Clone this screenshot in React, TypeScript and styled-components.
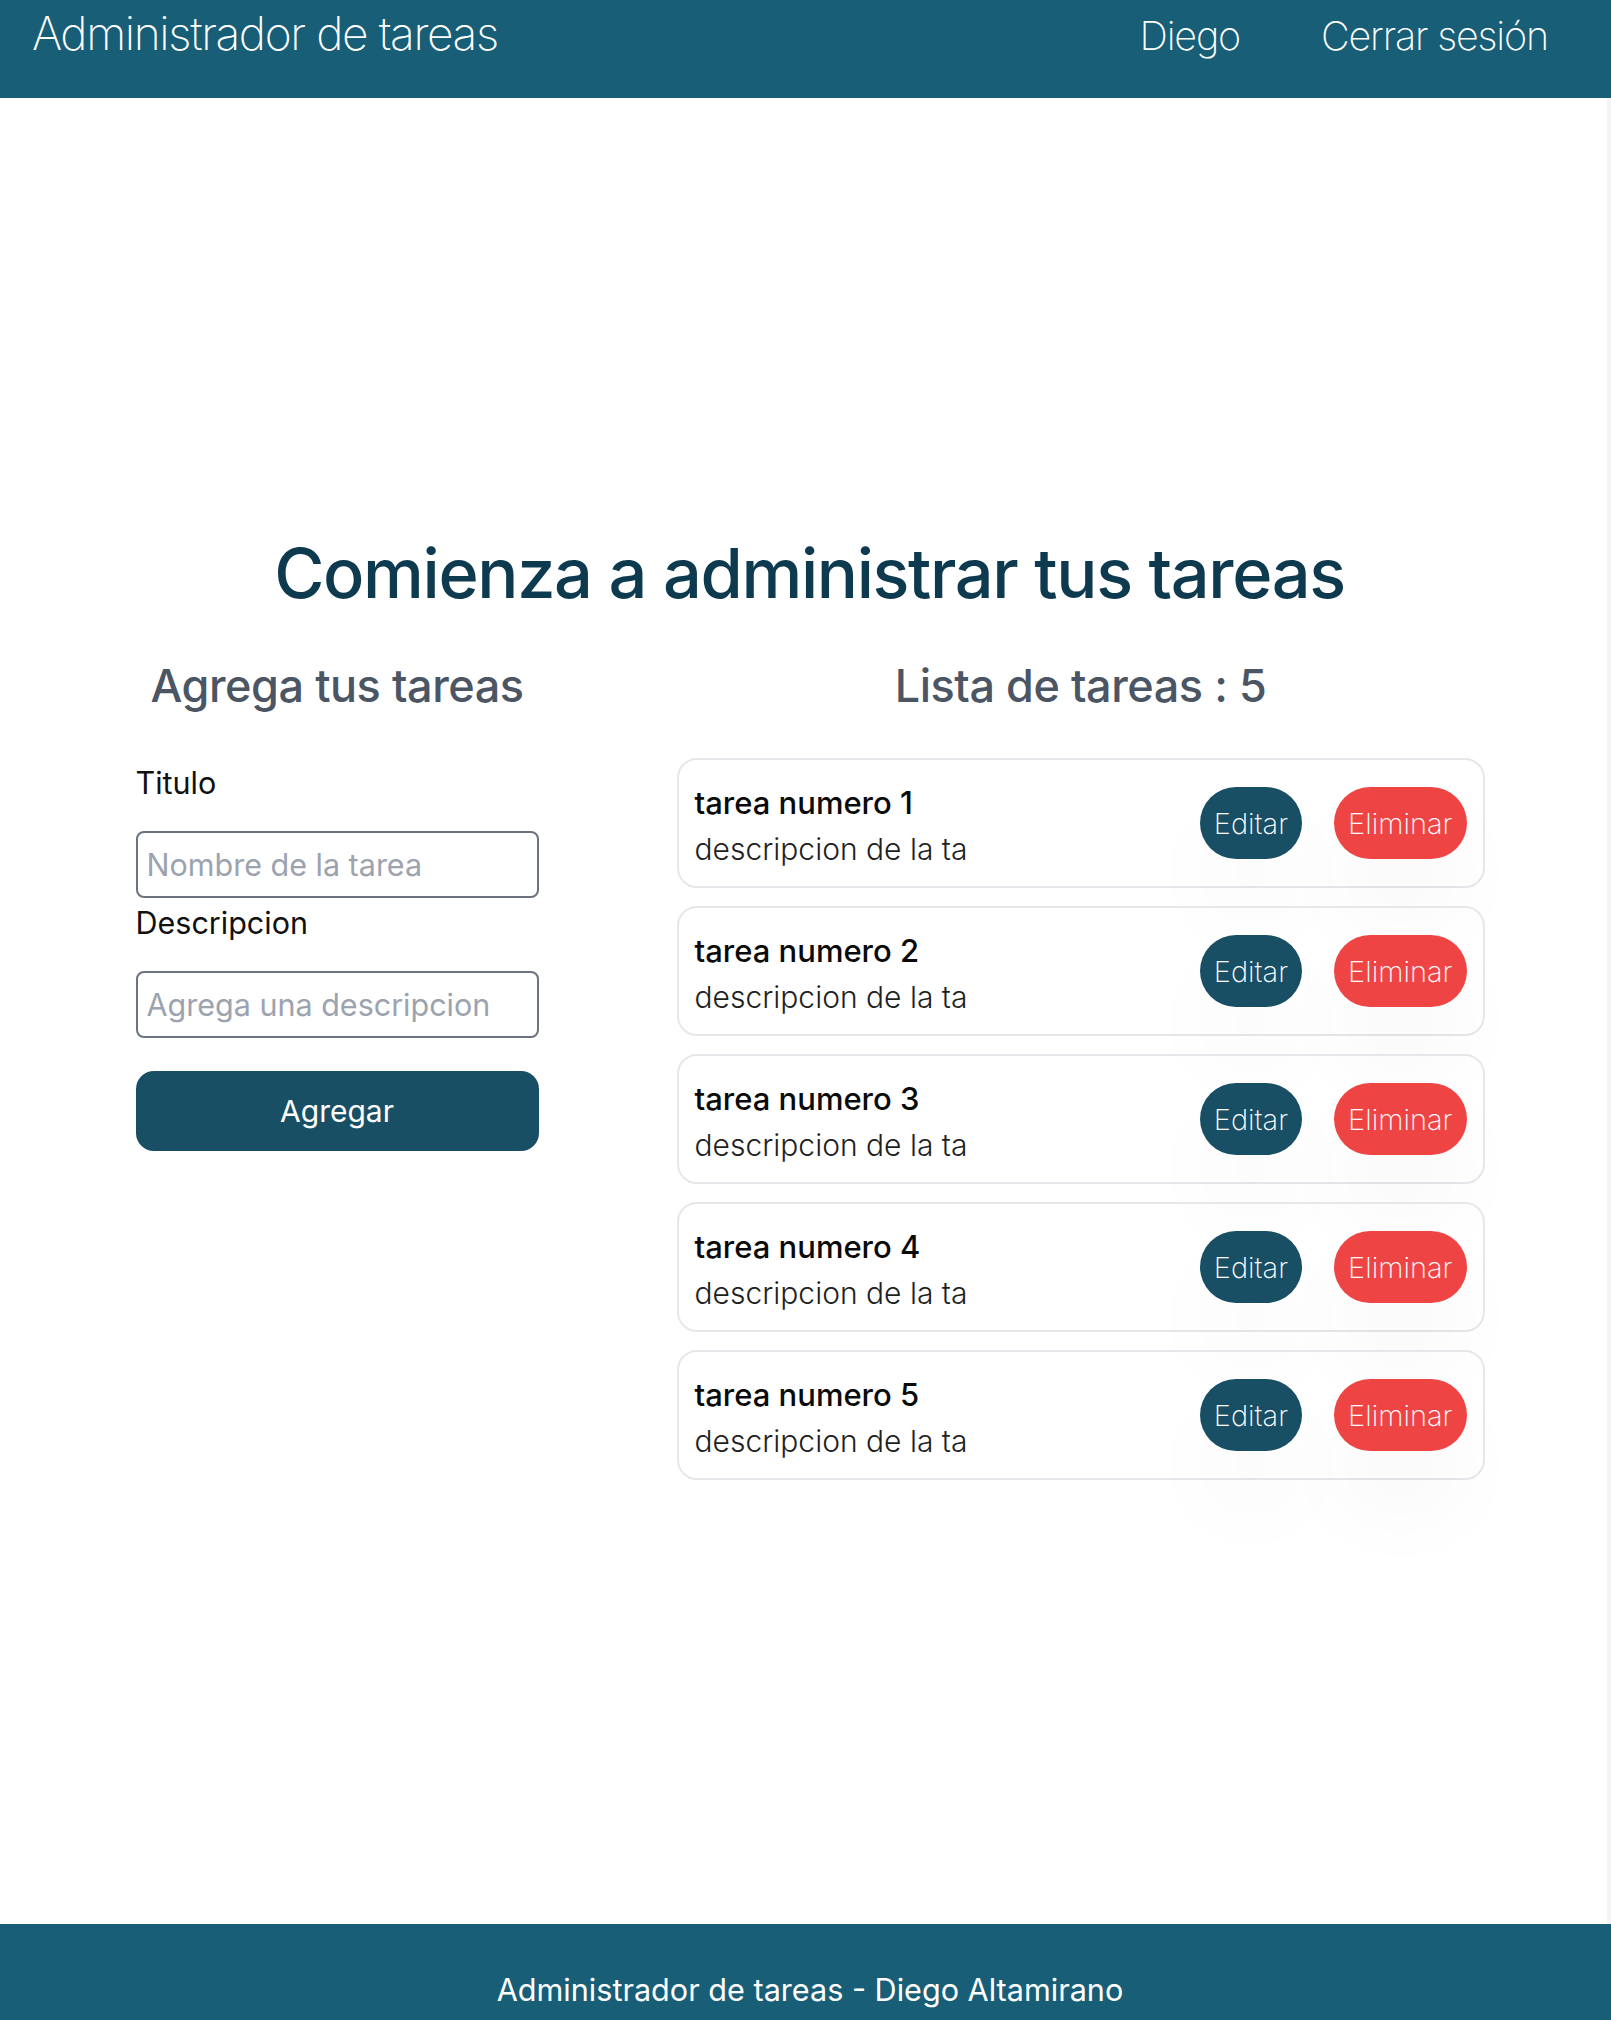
import React from "react";
import styled, { createGlobalStyle } from "styled-components";

const Global = createGlobalStyle`
  * { box-sizing: border-box; }
  html, body { margin: 0; padding: 0; background: #ffffff; }
  body { font-family: Inter, "Noto Sans", "Liberation Sans", sans-serif; }
`;

const Page = styled.div`
  min-height: 100vh;
  display: flex;
  flex-direction: column;
`;

const Header = styled.header`
  height: 98px;
  background: #175e76;
  color: #ffffff;
  display: flex;
  align-items: baseline;
  justify-content: space-between;
  padding: 6px 63px 0 32px;
`;

const Brand = styled.div`
  font-size: 46px;
  font-weight: 200;
  letter-spacing: -0.03em;
  line-height: 54px;
`;

const Nav = styled.nav`
  display: flex;
  align-items: baseline;
  gap: 81px;
`;

const NavItem = styled.span`
  font-size: 39.5px;
  font-weight: 200;
  letter-spacing: -0.03em;
  line-height: 54px;
`;

const Main = styled.main`
  flex: 1;
  display: flex;
  flex-direction: column;
  align-items: center;
  padding: 435px 0 0 12px;
  border-right: 4px solid #f4f4f4;
`;

const Title = styled.h1`
  margin: 0;
  font-size: 68.5px;
  font-weight: 500;
  line-height: 82px;
  letter-spacing: -0.02em;
  color: #0d3a4e;
`;

const Columns = styled.div`
  display: flex;
  gap: 138px;
  margin-top: 43px;
  margin-left: 1px;
`;

const LeftCol = styled.section`
  width: 403px;
  display: flex;
  flex-direction: column;
`;

const RightCol = styled.section`
  width: 808px;
  display: flex;
  flex-direction: column;
`;

const ColTitle = styled.h2`
  margin: 0 0 44px;
  text-align: center;
  font-size: 45px;
  font-weight: 500;
  line-height: 56px;
  letter-spacing: -0.01em;
  color: #4b5563;
`;

const Field = styled.div`
  display: flex;
  flex-direction: column;
  margin-top: 5px;
`;

const Label = styled.label`
  display: block;
  font-size: 30.5px;
  line-height: 40px;
  color: #111111;
  margin-bottom: 28px;
`;

const Input = styled.input`
  width: 100%;
  height: 67px;
  border: 2px solid #6b7280;
  border-radius: 8px;
  padding: 0 9px;
  font-family: inherit;
  font-size: 30.5px;
  color: #111;
  &::placeholder { color: #9ca3af; }
`;

const AddButton = styled.button`
  margin-top: 33px;
  height: 80px;
  width: 100%;
  border: none;
  border-radius: 18px;
  background: #184f65;
  color: #ffffff;
  font-family: inherit;
  font-size: 30px;
  font-weight: 400;
`;

const List = styled.div`
  display: flex;
  flex-direction: column;
  gap: 18px;
`;

const Card = styled.div`
  height: 130px;
  border: 2px solid #e5e7eb;
  border-radius: 20px;
  background: transparent;
  display: flex;
  align-items: center;
  justify-content: space-between;
  padding: 8px 16px 0 16px;
`;

const CardText = styled.div`
  display: flex;
  flex-direction: column;
`;

const CardTitle = styled.div`
  font-size: 31px;
  font-weight: 500;
  line-height: 44px;
  color: #0a0a0a;
`;

const CardDesc = styled.div`
  font-size: 30px;
  font-weight: 300;
  line-height: 48px;
  color: #1f1f1f;
`;

const Actions = styled.div`
  display: flex;
  gap: 32px;
  margin-top: -8px;
`;

const Pill = styled.button<{ $danger?: boolean }>`
  height: 72px;
  padding: 0 14px;
  border: none;
  border-radius: 36px;
  background: ${(p) => (p.$danger ? "#ef4444" : "#184f65")};
  color: #ffffff;
  font-family: inherit;
  font-size: 29px;
  font-weight: 200;
  box-shadow: 0 50px 100px -24px rgba(0, 0, 0, 0.16);
`;

const Footer = styled.footer`
  height: 96px;
  background: #175e76;
  color: #ffffff;
  display: flex;
  justify-content: center;
  align-items: flex-end;
  padding: 0 0 10px 9px;
  font-size: 30.6px;
  font-weight: 400;
  line-height: 40px;
`;

const tasks = [1, 2, 3, 4, 5].map((n) => ({
  title: `tarea numero ${n}`,
  desc: "descripcion de la ta",
}));

export default function App() {
  return (
    <Page>
      <Global />
      <Header>
        <Brand>Administrador de tareas</Brand>
        <Nav>
          <NavItem>Diego</NavItem>
          <NavItem>Cerrar sesión</NavItem>
        </Nav>
      </Header>
      <Main>
        <Title>Comienza a administrar tus tareas</Title>
        <Columns>
          <LeftCol>
            <ColTitle>Agrega tus tareas</ColTitle>
            <Field>
              <Label>Titulo</Label>
              <Input placeholder="Nombre de la tarea" />
            </Field>
            <Field>
              <Label>Descripcion</Label>
              <Input placeholder="Agrega una descripcion" />
            </Field>
            <AddButton>Agregar</AddButton>
          </LeftCol>
          <RightCol>
            <ColTitle>Lista de tareas : {tasks.length}</ColTitle>
            <List>
              {tasks.map((t) => (
                <Card key={t.title}>
                  <CardText>
                    <CardTitle>{t.title}</CardTitle>
                    <CardDesc>{t.desc}</CardDesc>
                  </CardText>
                  <Actions>
                    <Pill>Editar</Pill>
                    <Pill $danger>Eliminar</Pill>
                  </Actions>
                </Card>
              ))}
            </List>
          </RightCol>
        </Columns>
      </Main>
      <Footer>Administrador de tareas - Diego Altamirano</Footer>
    </Page>
  );
}
